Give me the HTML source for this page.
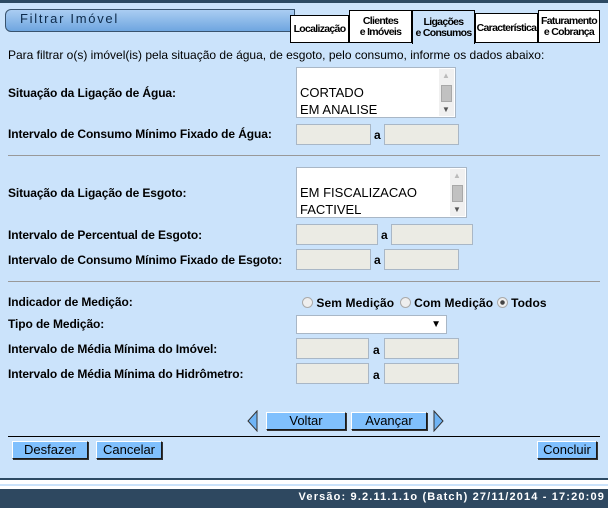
<!DOCTYPE html>
<html><head><meta charset="utf-8"><style>
*{margin:0;padding:0;box-sizing:border-box}
body{width:608px;height:508px;background:#cbe3fb;font-family:"Liberation Sans",Arial,sans-serif;font-size:12px;position:relative;overflow:hidden;color:#000}
.a{position:absolute;white-space:nowrap}
.lbl{position:absolute;left:8px;font-weight:bold;font-size:12px;letter-spacing:-0.1px}
.in{position:absolute;background:#ebebe4;border:1px solid #a9b7c6;height:21px}
.sel{position:absolute;background:#fff;border:1px solid #a9b7c6;font-size:13px;padding:16px 0 0 3px;line-height:17px}
.sb{position:absolute;right:1px;top:1px;bottom:1px;width:15px;background:#f0f0f0}
.th{position:absolute;left:2px;top:16px;width:11px;height:17px;background:#c1c1c1;border:1px solid #a8a8a8}
.up,.dn{position:absolute;left:3px;font-size:8px;line-height:8px;color:#555}
.up{top:3px;color:#bbb}.dn{bottom:2px}
.hr{position:absolute;left:8px;width:592px;height:1px;background:#999}
.btn{position:absolute;background:#80c0fd;border:1px solid #1a1a1a;border-top-color:#fff;border-left-color:#fff;text-align:center;font-size:13px;height:18px;line-height:16px;color:#000;box-shadow:1px 1px 0 #333}
.tab{position:absolute;top:10px;height:33px;background:#fff;border:1px solid #000;font-family:"Liberation Sans Narrow","Liberation Sans",sans-serif;font-weight:bold;font-size:10.5px;line-height:11px;text-align:center;display:flex;align-items:center;justify-content:center;letter-spacing:-0.7px;white-space:nowrap;overflow:hidden}
.ax{font-weight:bold;font-size:12px}
</style></head><body>
<div class="a" style="left:0;top:0;width:608px;height:3px;background:#2c4a63"></div>
<div class="a" style="left:5px;top:9px;width:290px;height:23px;border:1px solid #38536e;border-radius:6px 0 0 6px;background:linear-gradient(#aacdf2,#6fa6e0);"></div>
<div class="a" style="left:20px;top:11px;font-size:13px;letter-spacing:1.7px;color:#0d2a4a">Filtrar Imóvel</div>
<div class="tab" style="left:290px;width:59px;top:15px;height:28px">Localização</div>
<div class="tab" style="left:349px;width:63px">Clientes<br>e Imóveis</div>
<div class="tab" style="left:412px;width:63px;background:#cbe3fb;border-bottom:none;height:34px">Ligações<br>e Consumos</div>
<div class="tab" style="left:475px;width:63px;top:13px;height:30px">Característica</div>
<div class="tab" style="left:538px;width:62px">Faturamento<br>e Cobrança</div>
<div class="a" style="left:8px;top:48px;font-size:12px">Para filtrar o(s) imóvel(is) pela situação de água, de esgoto, pelo consumo, informe os dados abaixo:</div>

<div class="lbl" style="top:86px">Situação da Ligação de Água:</div>
<div class="sel" style="left:296px;top:67px;width:160px;height:51px">CORTADO<br>EM ANALISE<div class="sb"><span class="up">▲</span><div class="th"></div><span class="dn">▼</span></div></div>
<div class="lbl" style="top:127px">Intervalo de Consumo Mínimo Fixado de Água:</div>
<div class="in" style="left:296px;top:124px;width:75px"></div><div class="a ax" style="left:374px;top:128px">a</div><div class="in" style="left:384px;top:124px;width:75px"></div>
<div class="hr" style="top:155px"></div>

<div class="lbl" style="top:186px">Situação da Ligação de Esgoto:</div>
<div class="sel" style="left:296px;top:167px;width:171px;height:51px">EM FISCALIZACAO<br>FACTIVEL<div class="sb"><span class="up">▲</span><div class="th"></div><span class="dn">▼</span></div></div>
<div class="lbl" style="top:228px">Intervalo de Percentual de Esgoto:</div>
<div class="in" style="left:296px;top:224px;width:82px"></div><div class="a ax" style="left:381px;top:228px">a</div><div class="in" style="left:391px;top:224px;width:82px"></div>
<div class="lbl" style="top:253px">Intervalo de Consumo Mínimo Fixado de Esgoto:</div>
<div class="in" style="left:296px;top:249px;width:75px"></div><div class="a ax" style="left:374px;top:253px">a</div><div class="in" style="left:384px;top:249px;width:75px"></div>
<div class="hr" style="top:281px"></div>

<div class="lbl" style="top:295px">Indicador de Medição:</div>
<div class="a" style="left:302px;top:296px;font-weight:bold;font-size:12px;letter-spacing:0.1px">
<span style="display:inline-block;width:11px;height:11px;border:1px solid #aaa;border-radius:50%;background:#eee;vertical-align:-1px"></span> Sem Medição <span style="display:inline-block;width:11px;height:11px;border:1px solid #aaa;border-radius:50%;background:#eee;vertical-align:-1px;margin-left:2px"></span> Com Medição <span style="display:inline-block;width:11px;height:11px;border:1px solid #aaa;border-radius:50%;background:radial-gradient(#444 0 2px,#eee 2.5px);vertical-align:-1px"></span> Todos</div>
<div class="lbl" style="top:317px">Tipo de Medição:</div>
<div class="a" style="left:296px;top:315px;width:151px;height:19px;background:#fff;border:1px solid #a9b7c6;"><span style="position:absolute;right:5px;top:3px;font-size:10px">▼</span></div>
<div class="lbl" style="top:342px">Intervalo de Média Mínima do Imóvel:</div>
<div class="in" style="left:296px;top:338px;width:73px"></div><div class="a ax" style="left:373px;top:343px">a</div><div class="in" style="left:384px;top:338px;width:75px"></div>
<div class="lbl" style="top:367px">Intervalo de Média Mínima do Hidrômetro:</div>
<div class="in" style="left:296px;top:363px;width:73px"></div><div class="a ax" style="left:373px;top:368px">a</div><div class="in" style="left:384px;top:363px;width:75px"></div>

<svg class="a" style="left:247px;top:410px" width="12" height="22"><polygon points="10,1 1,11 10,21" fill="#6fb4f5" stroke="#333"/></svg>
<div class="btn" style="left:266px;top:412px;width:80px">Voltar</div>
<div class="btn" style="left:351px;top:412px;width:76px">Avançar</div>
<svg class="a" style="left:432px;top:410px" width="12" height="22"><polygon points="2,1 11,11 2,21" fill="#6fb4f5" stroke="#333"/></svg>
<div class="hr" style="top:436px;background:#000"></div>
<div class="btn" style="left:12px;top:441px;width:76px">Desfazer</div>
<div class="btn" style="left:96px;top:441px;width:66px">Cancelar</div>
<div class="btn" style="left:537px;top:441px;width:60px">Concluir</div>

<div class="a" style="left:0;top:478px;width:608px;height:2px;background:#2c4a63"></div>
<div class="a" style="left:0;top:480px;width:608px;height:4px;background:#fff"></div>
<div class="a" style="left:0;top:484px;width:608px;height:2px;background:#cbe3fb"></div>
<div class="a" style="left:0;top:486px;width:608px;height:3px;background:#fff"></div>
<div class="a" style="left:0;top:489px;width:608px;height:19px;background:#2e4860"></div>
<div class="a" style="right:3px;top:491px;color:#fff;font-weight:bold;font-size:11px;letter-spacing:1.15px">Versão: 9.2.11.1.1o (Batch) 27/11/2014 - 17:20:09</div>
</body></html>
